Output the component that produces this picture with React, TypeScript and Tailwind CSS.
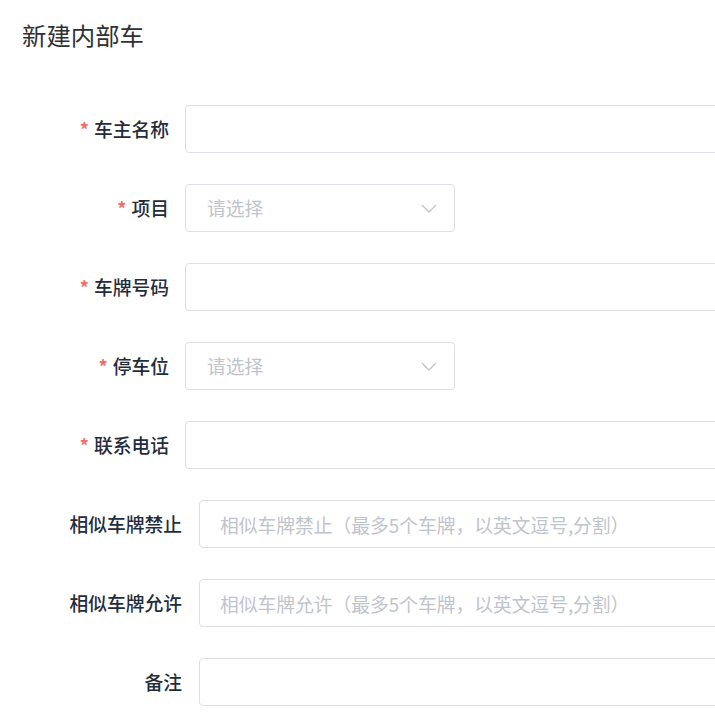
import React from 'react'

interface FieldProps {
  label: string
  required?: boolean
  wide?: boolean
  children: React.ReactNode
}

const Field: React.FC<FieldProps> = ({ label, required, wide, children }) => (
  <div className="flex items-center h-[48px]">
    <label
      className={`flex items-center justify-end shrink-0 text-[18.75px] font-medium text-[#1f2d3d] ${
        wide ? 'w-[182px] mr-[17px]' : 'w-[169px] mr-[16px]'
      }`}
    >
      {required && <span className="text-[#f56c6c] mr-[5px] text-[18px] font-semibold">*</span>}
      {label}
    </label>
    {children}
  </div>
)

const TextInput: React.FC<{ placeholder?: string }> = ({ placeholder }) => (
  <input
    placeholder={placeholder}
    className="h-[48px] w-[620px] shrink-0 rounded-[4px] border border-[#dcdfe6] bg-white px-[20px] text-[18.75px] text-[#606266] placeholder:text-[#c0c4cc] outline-none"
  />
)

const SelectBox: React.FC = () => (
  <div className="flex h-[48px] w-[270px] shrink-0 items-center justify-between rounded-[4px] border border-[#dcdfe6] bg-white pl-[21px] pr-[17px]">
    <span className="text-[18.75px] text-[#c0c4cc]">请选择</span>
    <svg width="16" height="9" viewBox="0 0 16 9" fill="none">
      <path d="M1 1l7 7 7-7" stroke="#c0c4cc" strokeWidth="1.3" />
    </svg>
  </div>
)

export default function App() {
  return (
    <div
      className="w-[715px] h-[713px] overflow-hidden bg-white"
      style={{ fontFamily: '"Noto Sans CJK SC", "Noto Sans", sans-serif' }}
    >
      <h1 className="pl-[22px] pt-[18px] text-[24.4px] font-normal leading-[34px] text-[#303133]">新建内部车</h1>
      <div className="mt-[53px] flex flex-col gap-[31px]">
        <Field label="车主名称" required>
          <TextInput />
        </Field>
        <Field label="项目" required>
          <SelectBox />
        </Field>
        <Field label="车牌号码" required>
          <TextInput />
        </Field>
        <Field label="停车位" required>
          <SelectBox />
        </Field>
        <Field label="联系电话" required>
          <TextInput />
        </Field>
        <Field label="相似车牌禁止" wide>
          <TextInput placeholder="相似车牌禁止（最多5个车牌，以英文逗号,分割）" />
        </Field>
        <Field label="相似车牌允许" wide>
          <TextInput placeholder="相似车牌允许（最多5个车牌，以英文逗号,分割）" />
        </Field>
        <Field label="备注" wide>
          <TextInput />
        </Field>
      </div>
    </div>
  )
}
